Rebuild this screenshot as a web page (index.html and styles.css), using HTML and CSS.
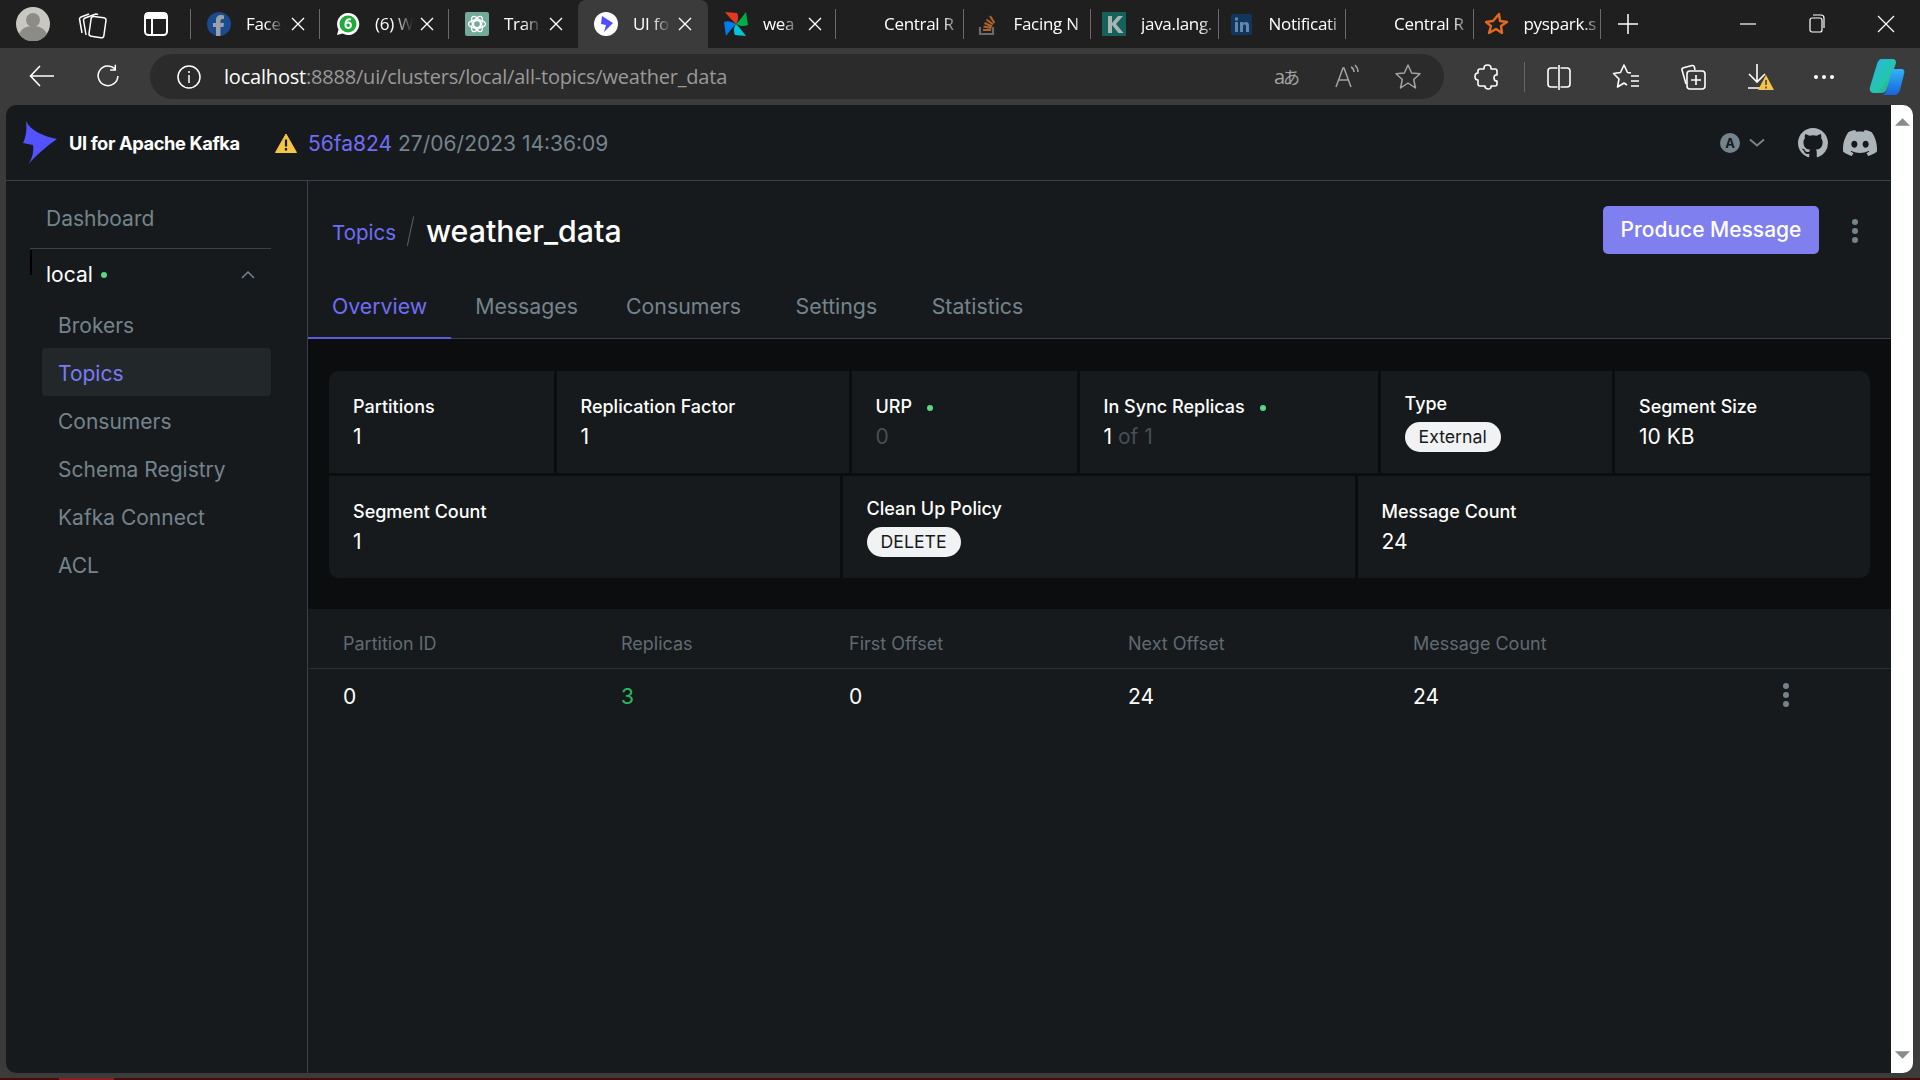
FILE: index.html
```html
<!DOCTYPE html>
<html lang="en">
<head>
<meta charset="utf-8">
<title>UI for Apache Kafka</title>
<link rel="stylesheet" href="styles.css">
</head>
<body>
<svg class="defs" width="0" height="0"><defs><symbol id="x" viewBox="0 0 14 14"><path d="M1 1l12 12M13 1L1 13" stroke="#fff" stroke-width="1.400" fill="none"/></symbol></defs></svg>
<div class="browser">
  <div class="tabbar">
    <svg class="avatar" viewBox="0 0 34 34"><circle cx="17" cy="17" r="17" fill="#c9c7c2"/><circle cx="17" cy="13" r="7" fill="#8d8b87"/><path d="M3 27c3-6 8-8 14-8s11 2 14 8a17 17 0 0 1-28 0z" fill="#8d8b87"/></svg>
    <svg class="tool-ico ws" viewBox="0 0 30 30" fill="none" stroke="#fff" stroke-width="1.500" stroke-linejoin="round"><path d="M4 24L1.500 10c0-1 .5-1.500 1.500-2l8-3"/><path d="M8 26L5.500 11c0-1 .5-1.500 1.500-2l11-4c1 0 1.500.3 1.800 1"/><rect x="12" y="8" width="15" height="20" rx="2.500" transform="rotate(8 19 18)"/></svg>
    <svg class="tool-ico tabsico" viewBox="0 0 30 30" fill="none" stroke="#fff" stroke-width="2"><rect x="4" y="4" width="22" height="22" rx="3.500"/><path d="M4 8.500h22M11 10v16"/><path d="M5 5h20v4H5z" fill="#fff"/></svg>
    <span class="sep"></span>
    <div class="tab"><svg class="fav" viewBox="0 0 24 24"><circle cx="12" cy="12" r="12" fill="#1b4a8f"/><path d="M13.500 24v-9h3l.5-4h-3.500V9c0-1 .5-2 2-2H17V3.500S15.500 3 14 3c-3 0-5 2-5 5v3H6v4h3v9z" fill="#9aa0a8"/></svg><span class="tab-text">Face</span><svg class="tab-x"><use href="#x"/></svg></div>
    <div class="tab"><svg class="fav" viewBox="0 0 24 24"><path d="M12 1a11 11 0 0 0-9.500 16.500L1 23l5.700-1.500A11 11 0 1 0 12 1z" fill="#fff"/><circle cx="12" cy="12" r="8.500" fill="#1faa3c"/><path d="M15 7.500c-3-1-5.500 1-5.500 4.500v1.500a2.700 2.700 0 1 0 2.700-3c-1 0-1.800.4-2.400 1" fill="none" stroke="#fff" stroke-width="2"/></svg><span class="tab-text">(6) W</span><svg class="tab-x"><use href="#x"/></svg></div>
    <div class="tab"><svg class="fav" viewBox="0 0 24 24"><rect width="24" height="24" rx="2" fill="#74aa9c"/><g fill="none" stroke="#fff" stroke-width="1.300"><circle cx="12" cy="12" r="3.500"/><ellipse cx="12" cy="12" rx="8.500" ry="4"/><ellipse cx="12" cy="12" rx="8.500" ry="4" transform="rotate(60 12 12)"/><ellipse cx="12" cy="12" rx="8.500" ry="4" transform="rotate(120 12 12)"/></g></svg><span class="tab-text">Tran</span><svg class="tab-x"><use href="#x"/></svg></div>
    <div class="tab tab-active"><svg class="fav" viewBox="0 0 24 24"><circle cx="12" cy="12" r="12" fill="#fff"/><path d="M8 4l11 7-9 9 2-7-5-1z" fill="#4f4fff"/></svg><span class="tab-text">UI fo</span><svg class="tab-x"><use href="#x"/></svg></div>
    <div class="tab tab-air"><svg class="fav" viewBox="0 0 24 24"><path d="M12 12C8 16 5 20 2 24L0 10c4-2 8 0 12 2z" fill="#017cee"/><path d="M12 12C8 8 4 4 1 0l12 1c2 4 1 8-1 11z" fill="#e43921"/><path d="M12 12c4-4 7-8 10-12l2 13c-4 2-8 1-12-1z" fill="#00ad46"/><path d="M12 12c4 4 7 8 10 12l-11-1c-2-4-1-8 1-11z" fill="#00c7d4"/></svg><span class="tab-text">wea</span><svg class="tab-x"><use href="#x"/></svg></div>
    <div class="tab tab-n tab-blank"><span class="fav"></span><span class="tab-text">Central R</span></div>
    <div class="tab tab-n"><svg class="fav" viewBox="0 0 24 24" fill="none" stroke="#a8642c" stroke-width="2.200"><path d="M5 15v7h13v-7" stroke="#6a6a6a"/><path d="M8 18h8M8.500 14.500l8 1.500M9.500 11l7.500 3.500M11.500 7.500l6.500 5M15 4l4.500 7"/></svg><span class="tab-text">Facing N</span></div>
    <div class="tab tab-n"><svg class="fav" viewBox="0 0 24 24"><rect width="24" height="24" fill="#17615c"/><path d="M6 4h4v7l6-7h5l-7 8 7.500 9H16.500L10 13v8H6z" fill="#a9b5b3"/></svg><span class="tab-text">java.lang.</span></div>
    <div class="tab tab-n"><svg class="fav" viewBox="0 0 24 24"><rect x="1" y="2" width="21" height="21" rx="2" fill="#12355c"/><path d="M5 10h3v10H5zM5 5.500h3v3H5zM10 10h3v1.500c1-2 6-2.500 6 2V20h-3v-6c0-2-3-2-3 0v6h-3z" fill="#5f87ad"/></svg><span class="tab-text">Notificati</span></div>
    <div class="tab tab-n tab-blank"><span class="fav"></span><span class="tab-text">Central R</span></div>
    <div class="tab tab-n"><svg class="fav" viewBox="0 0 24 24" fill="none" stroke="#e2691f" stroke-width="2.400" stroke-linejoin="round"><path d="M14 2l1 7 7 1-6 4 1 7-6-4-7 4 2-7-5-4 7-1z"/></svg><span class="tab-text">pyspark.s</span></div>
    <svg class="win plus" viewBox="0 0 24 24" stroke="#fff" stroke-width="1.500"><path d="M12 2v20M2 12h20"/></svg>
    <svg class="win wmin" viewBox="0 0 24 24" stroke="#fff" stroke-width="1.200"><path d="M4 12h16"/></svg>
    <svg class="win wbox" viewBox="0 0 24 24" stroke="#fff" stroke-width="1.200" fill="none"><rect x="5" y="6" width="12" height="14" rx="2"/><path d="M8 3h8a3 3 0 0 1 3 3v10"/></svg>
    <svg class="win wbox" viewBox="0 0 24 24" stroke="#fff" stroke-width="1.200"><path d="M4 4l16 16M20 4L4 20"/></svg>
  </div>

  <div class="toolbar">
    <svg class="nav-ico" viewBox="-3 -3 36 36" fill="none" stroke="#fff" stroke-width="1.600"><path d="M27 15H4M13 5L3.500 15 13 25"/></svg>
    <svg class="nav-ico reload" viewBox="-6 -6 42 42" fill="none" stroke="#fff" stroke-width="1.800"><path d="M23 6.500A11.500 11.500 0 1 0 26.500 15M23.500 2v6h-6"/></svg>
    <div class="omnibox">
      <svg class="slot" viewBox="0 0 30 30" fill="none" stroke="#fff" stroke-width="1.500"><circle cx="15" cy="15" r="11"/><path d="M15 13v8M15 9v2"/></svg>
      <div class="url"><span class="url-host">localhost</span>:8888/ui/clusters/local/all-topics/weather_data</div>
      <div class="omni-actions">
        <span class="slot translate">a<span class="translate-jp">あ</span></span>
        <svg class="slot" viewBox="0 0 30 30" fill="none" stroke="#a3a3a3" stroke-width="1.500"><path d="M4 25L11 6h1l7 19M7 18h10M19 5c2 1 3 3 3 5M23 3c2 2 3 4 3 7"/></svg>
        <svg class="slot" viewBox="0 0 30 30" fill="none" stroke="#a3a3a3" stroke-width="1.500" stroke-linejoin="round"><path d="M15 3l3.600 8 8.400.800-6.300 5.700 1.800 8.500L15 21l-7.500 5 1.800-8.500L3 11.800l8.400-.800z"/></svg>
      </div>
    </div>
    <div class="tool-actions">
      <svg class="slot" viewBox="0 0 30 30" fill="none" stroke="#fff" stroke-width="1.600" stroke-linejoin="round"><path d="M12 6c0-4 7-4 7 0v1h4c1 0 2 1 2 2v4c-4-1-4 6 0 6v3c0 1-1 2-2 2h-4c1 4-6 4-6 0H8c-1 0-2-1-2-2v-4c-4 0-4-7 0-7V9c0-1 1-2 2-2h4z"/></svg>
      <span class="tool-sep"></span>
      <svg class="slot" viewBox="0 0 30 30" fill="none" stroke="#fff" stroke-width="1.600"><rect x="4" y="6" width="22" height="19" rx="3"/><path d="M15 3v25" stroke-width="3" stroke="#3b3b3b"/><path d="M15 3v25"/></svg>
      <svg class="slot" viewBox="0 0 30 30" fill="none" stroke="#fff" stroke-width="1.600" stroke-linejoin="round"><path d="M20 11l-3.500-.5L13 3l-3.500 7.500-7 1L8 17l-1.500 8 6.500-4 3 2M20 14h8M20 19h8M20 24h8"/></svg>
      <svg class="slot" viewBox="0 0 30 30" fill="none" stroke="#fff" stroke-width="1.600"><path d="M8 22L4 8c-.3-1 .5-2 1.500-2.300L14 3.500c1-.2 2 .3 2.300 1.300L17 8"/><rect x="9" y="9" width="18" height="18" rx="3"/><path d="M18 13v10M13 18h10"/></svg>
      <svg class="slot" viewBox="0 0 30 30"><g fill="none" stroke="#fff" stroke-width="1.600"><path d="M12 2v18M4 12l8 8 8-8M3 26h13"/></g><path d="M21 13l8 15H13z" fill="#f4c44e"/><path d="M21 18v5M21 24.500v2" stroke="#3b3b3b" stroke-width="1.500"/></svg>
      <span class="slot slot-tight dots"><i></i><i></i><i></i></span>
      <svg class="slot slot-tight copilot" viewBox="0 0 36 38"><defs><linearGradient id="cpa" x1="0" y1="0" x2="1" y2="1"><stop offset="0" stop-color="#25b6ee"/><stop offset=".6" stop-color="#25c6a8"/><stop offset="1" stop-color="#2e8f8b"/></linearGradient><linearGradient id="cpb" x1="0" y1="0" x2="0" y2="1"><stop offset="0" stop-color="#2fb4f2"/><stop offset="1" stop-color="#1b63e0"/></linearGradient></defs><path d="M13 1h10c3 0 4 1 4 4l-9 26c-1 3-3 4-6 4H6c-4 0-6-2-5-6L8 6c1-3 2-5 5-5z" fill="url(#cpa)"/><path d="M23 11h9c3 0 4 2 3 5l-4 16c-1 3-3 5-6 5H12c3 0 5-2 6-5z" fill="url(#cpb)"/></svg>
    </div>
  </div>

  <div class="viewport">
    <div class="page">
      <header class="app-header">
        <svg class="logo" viewBox="0 0 36 46"><path d="M4 1c4 9 16 15 31 18C25 26 14 35 6 45c4-6 6-13 5-20L1 23c3-6 4-14 3-22z" fill="#5252ff"/></svg>
        <span class="brand">UI for Apache Kafka</span>
        <svg class="warn" viewBox="0 0 22 20"><path d="M11 1l10.500 18.500H.500z" fill="#f5c547" stroke="#f5c547" stroke-linejoin="round"/><path d="M11 6.500v7M11 15v2.500" stroke="#171a1c" stroke-width="2.200"/></svg>
        <span class="commit">56fa824</span>
        <span class="build-date">27/06/2023 14:36:09</span>
        <div class="header-right">
          <span class="user-a">A</span>
          <svg class="chev" viewBox="0 0 16 10" fill="none" stroke="#73848c" stroke-width="2"><path d="M1 1.500l7 6 7-6"/></svg>
          <svg class="gh" viewBox="0 0 16 16"><path fill="#abb5ba" d="M8 0C3.580 0 0 3.580 0 8c0 3.540 2.290 6.530 5.470 7.590.4.070.55-.17.55-.38 0-.19-.01-.82-.01-1.490-2.010.37-2.530-.49-2.690-.94-.09-.23-.48-.94-.82-1.130-.28-.15-.68-.52-.01-.53.63-.01 1.080.58 1.230.82.720 1.210 1.870.87 2.330.66.070-.52.280-.87.510-1.070-1.780-.2-3.640-.89-3.640-3.950 0-.87.310-1.590.820-2.150-.08-.2-.36-1.020.08-2.120 0 0 .67-.21 2.200.82.640-.18 1.320-.27 2-.27.680 0 1.360.09 2 .27 1.530-1.040 2.200-.82 2.200-.82.440 1.100.160 1.920.080 2.120.510.560.820 1.270.820 2.150 0 3.070-1.870 3.750-3.650 3.950.290.250.540.730.540 1.480 0 1.070-.01 1.930-.01 2.200 0 .21.150.46.550.38A8.013 8.013 0 0016 8c0-4.420-3.580-8-8-8z"/></svg>
          <svg class="dc" viewBox="0 0 24 24"><path fill="#abb5ba" d="M20.317 4.3698a19.7913 19.7913 0 00-4.8851-1.5152.0741.0741 0 00-.0785.0371c-.211.3753-.4447.8648-.6083 1.2495-1.8447-.2762-3.68-.2762-5.4868 0-.1636-.3933-.4058-.8742-.6177-1.2495a.077.077 0 00-.0785-.037 19.7363 19.7363 0 00-4.8852 1.515.0699.0699 0 00-.0321.0277C.5334 9.0458-.319 13.5799.0992 18.0578a.0824.0824 0 00.0312.0561c2.0528 1.5076 4.0413 2.4228 5.9929 3.0294a.0777.0777 0 00.0842-.0276c.4616-.6304.8731-1.2952 1.226-1.9942a.076.076 0 00-.0416-.1057c-.6528-.2476-1.2743-.5495-1.8722-.8923a.077.077 0 01-.0076-.1277c.1258-.0943.2517-.1923.3718-.2914a.0743.0743 0 01.0776-.0105c3.9278 1.7933 8.18 1.7933 12.0614 0a.0739.0739 0 01.0785.0095c.1202.099.246.1981.3728.2924a.077.077 0 01-.0066.1276 12.2986 12.2986 0 01-1.873.8914.0766.0766 0 00-.0407.1067c.3604.698.7719 1.3628 1.225 1.9932a.076.076 0 00.0842.0286c1.961-.6067 3.9495-1.5219 6.0023-3.0294a.077.077 0 00.0313-.0552c.5004-5.177-.8382-9.6739-3.5485-13.6604a.061.061 0 00-.0312-.0286zM8.02 15.3312c-1.1825 0-2.1569-1.0857-2.1569-2.419 0-1.3332.9555-2.4189 2.157-2.4189 1.2108 0 2.1757 1.0952 2.1568 2.419 0 1.3332-.9555 2.4189-2.1569 2.4189zm7.9748 0c-1.1825 0-2.1569-1.0857-2.1569-2.419 0-1.3332.9554-2.4189 2.1569-2.4189 1.2108 0 2.1757 1.0952 2.1568 2.419 0 1.3332-.946 2.4189-2.1568 2.4189Z"/></svg>
        </div>
      </header>
      <div class="app-body">
        <nav class="sidebar">
          <div class="nav-top">Dashboard</div>
          <div class="cluster"><span class="cluster-name">local</span><span class="dot"></span><svg class="cluster-chev" viewBox="0 0 14 8" fill="none" stroke="#73848c" stroke-width="1.500"><path d="M1 7l6-6 6 6"/></svg></div>
          <div class="nav-item">Brokers</div>
          <div class="nav-item nav-selected">Topics</div>
          <div class="nav-item">Consumers</div>
          <div class="nav-item">Schema Registry</div>
          <div class="nav-item">Kafka Connect</div>
          <div class="nav-item">ACL</div>
        </nav>
        <main class="main">
          <div class="title-row">
            <span class="crumb">Topics</span>
            <span class="crumb-sep"></span>
            <h1 class="title">weather_data</h1>
            <button class="produce">Produce Message</button>
            <span class="kebab kebab-page"><i></i><i></i><i></i></span>
          </div>
          <div class="tabs">
            <span class="tab-link tab-link-on">Overview</span>
            <span class="tab-link">Messages</span>
            <span class="tab-link">Consumers</span>
            <span class="tab-link tab-link-wide">Settings</span>
            <span class="tab-link tab-link-wide">Statistics</span>
          </div>
          <section class="metrics">
            <div class="metric-row metric-row-a">
              <div class="metric metric-first"><div class="m-label">Partitions</div><div class="m-value">1</div></div>
              <div class="metric"><div class="m-label">Replication Factor</div><div class="m-value">1</div></div>
              <div class="metric"><div class="m-label">URP<span class="dot dot-m"></span></div><div class="m-value m-dim">0</div></div>
              <div class="metric"><div class="m-label">In Sync Replicas<span class="dot dot-m"></span></div><div class="m-value">1 <span class="m-dim">of 1</span></div></div>
              <div class="metric metric-pill"><div class="m-label">Type</div><span class="pill">External</span></div>
              <div class="metric metric-last"><div class="m-label">Segment Size</div><div class="m-value">10 KB</div></div>
            </div>
            <div class="metric-row metric-row-b">
              <div class="metric metric-first-b"><div class="m-label">Segment Count</div><div class="m-value">1</div></div>
              <div class="metric metric-pill"><div class="m-label">Clean Up Policy</div><span class="pill">DELETE</span></div>
              <div class="metric metric-last-b"><div class="m-label">Message Count</div><div class="m-value">24</div></div>
            </div>
          </section>
          <section class="table">
            <div class="t-row t-head"><span>Partition ID</span><span>Replicas</span><span>First Offset</span><span>Next Offset</span><span>Message Count</span><span></span></div>
            <div class="t-row t-data"><span>0</span><span class="t-green">3</span><span>0</span><span>24</span><span>24</span><span class="kebab"><i></i><i></i><i></i></span></div>
          </section>
        </main>
      </div>
    </div>
    <div class="scrollbar">
      <svg class="arrow" viewBox="0 0 16 8"><path d="M8 0l8 8H0z" fill="#8a8a8a"/></svg>
      <svg class="arrow" viewBox="0 0 16 8"><path d="M8 8L0 0h16z" fill="#8a8a8a"/></svg>
    </div>
  </div>
  <div class="bottom-gap"></div>
  <div class="taskstrip"><span class="task-hi"></span></div>
</div>
</body>
</html>
```

FILE: styles.css
```css
* { box-sizing: border-box; }
html, body { margin: 0; padding: 0; height: 100%; overflow: hidden; background: #3b3b3b; }
body { font-family: "Inter", "Liberation Sans", sans-serif; }
.defs { display: block; height: 0; }
.browser { width: 1920px; height: 1080px; display: flex; flex-direction: column; }

/* browser chrome */
.tabbar { height: 48px; background: #1f1f1f; display: flex; align-items: center; padding-left: 16px; font-family: "Open Sans", "Liberation Sans", sans-serif; color: #fff; flex: none; }
.avatar { width: 34px; height: 34px; flex: none; }
.tool-ico { width: 30px; height: 30px; flex: none; }
.ws { margin-left: 28px; }
.tabsico { margin-left: 33px; }
.sep { width: 1px; height: 30px; background: #6a6a6a; margin-left: 19px; flex: none; }
.tab { width: 129px; height: 48px; display: flex; align-items: center; padding-left: 16px; flex: none; position: relative; }
.tab::after { content: ""; position: absolute; right: 0; top: 9px; width: 1px; height: 30px; background: #6a6a6a; }
.tab-active { width: 130px; background: #3b3b3b; border-radius: 8px 8px 0 0; }
.tab-active::after, .tab:nth-of-type(3)::after { display: none; }
.tab-air { width: 128px; }
.tab-n { width: 127.5px; padding-left: 11px; }
.tab-blank { padding-left: 16px; }
.fav { width: 24px; height: 24px; flex: none; display: block; }
.tab-text { margin: 0 0 2px 15px; width: 38px; font-size: 17px; white-space: nowrap; overflow: hidden; -webkit-mask-image: linear-gradient(90deg, #000 50%, transparent); mask-image: linear-gradient(90deg, #000 50%, transparent); flex: none; letter-spacing: -0.3px; }
.tab-n .tab-text { width: 78px; -webkit-mask-image: linear-gradient(90deg, #000 75%, transparent); mask-image: linear-gradient(90deg, #000 75%, transparent); }
.tab-blank .tab-text { margin-left: 8px; }
.tab-x { width: 14px; height: 14px; margin-left: 7px; flex: none; }
.win { width: 24px; height: 24px; flex: none; }
.plus { margin-left: 15px; }
.wmin { margin-left: 96px; }
.wbox { margin-left: 45px; }

.toolbar { height: 57px; background: #3b3b3b; display: flex; align-items: flex-start; padding: 6px 0 0 24px; flex: none; }
.nav-ico { width: 36px; height: 36px; margin-top: 4px; flex: none; }
.reload { margin-left: 30px; }
.omnibox { width: 1294px; height: 45px; margin-left: 24px; background: #2b2b2b; border-radius: 23px; display: flex; align-items: center; padding: 0 21px 0 24px; flex: none; font-family: "Open Sans", "Liberation Sans", sans-serif; }
.slot { width: 30px; height: 30px; flex: none; display: block; }
.url { margin-left: 20px; font-size: 20px; color: #9a9a9a; white-space: nowrap; letter-spacing: -0.2px; }
.url-host { color: #fff; }
.omni-actions { margin-left: auto; display: flex; gap: 31px; align-items: center; }
.translate { font-size: 20px; color: #a3a3a3; line-height: 30px; text-align: center; white-space: nowrap; letter-spacing: -2px; }
.translate-jp { font-family: "Noto Sans CJK JP", sans-serif; font-size: 17px; }
.tool-actions { margin-left: 28px; display: flex; align-items: center; height: 45px; }
.tool-sep { width: 1px; height: 30px; background: #666; margin: 0 19px 0 22px; flex: none; }
.tool-actions .slot + .slot { margin-left: 37px; }
.tool-actions .slot-tight.slot-tight { margin-left: 34px; }
.tool-actions .copilot { width: 36px; height: 38px; margin-left: 30px !important; }
.dots { display: flex; gap: 4px; align-items: center; justify-content: center; }
.dots i { width: 4px; height: 4px; border-radius: 50%; background: #fff; }

/* app viewport */
.viewport { height: 968px; display: flex; margin: 0 7px 0 6px; flex: none; }
.page { flex: 1; background: #171a1c; border-radius: 10px 0 0 10px; display: flex; flex-direction: column; color: #fff; min-width: 0; }
.scrollbar { width: 22px; background: #fff; border-radius: 0 10px 10px 0; display: flex; flex-direction: column; justify-content: space-between; align-items: center; padding: 13px 0 14px; flex: none; }
.arrow { width: 15px; height: 8px; }
.bottom-gap { height: 5px; background: #3b3b3b; flex: none; }
.taskstrip { height: 2px; background: #4a0a0a; flex: none; }
.task-hi { display: block; width: 55px; height: 2px; margin-left: 59px; background: #8c1f1f; }

.app-header { height: 76px; border-bottom: 1px solid #3a4148; display: flex; align-items: center; padding-left: 16px; flex: none; }
.logo { width: 36px; height: 46px; flex: none; }
.brand { margin-left: 11px; font-size: 18.300px; font-weight: 700; letter-spacing: -0.4px; white-space: nowrap; width: 176px; }
.warn { width: 22px; height: 20px; margin-left: 30px; flex: none; }
.commit { margin: 2px 0 0 11px; font-size: 21px; color: #6e6ef5; }
.build-date { margin: 2px 0 0 6px; font-size: 21px; color: #73848c; }
.header-right { margin-left: auto; display: flex; align-items: center; padding-right: 14px; }
.user-a { width: 20px; height: 20px; border-radius: 50%; background: #73848c; color: #171a1c; font-size: 13px; font-weight: 700; text-align: center; line-height: 20px; }
.chev { width: 16px; height: 10px; margin-left: 9px; }
.gh { width: 30px; height: 30px; margin-left: 33px; }
.dc { width: 34px; height: 34px; margin-left: 15px; }

.app-body { flex: 1; display: flex; min-height: 0; }
.sidebar { width: 302px; border-right: 1px solid #3a4148; padding: 14px 36px 0 24px; flex: none; font-size: 21px; color: #73848c; }
.nav-top { height: 48px; line-height: 48px; padding-left: 16px; margin-bottom: 5px; }
.cluster { height: 52px; border-top: 1px solid #3a4148; display: flex; align-items: center; padding-left: 16px; color: #fff; position: relative; }
.cluster::before { content: ""; position: absolute; left: 0; top: 1px; width: 2px; height: 25px; background: #000; }
.dot { width: 6px; height: 6px; border-radius: 50%; background: #5cd685; margin-left: 8px; flex: none; display: inline-block; }
.cluster-chev { width: 14px; height: 8px; margin-left: auto; margin-right: 16px; }
.nav-item { height: 48px; line-height: 51px; margin-left: 12px; padding-left: 16px; border-radius: 4px; }
.nav-selected { background: #22282a; color: #7b7bf5; }

.main { flex: 1; display: flex; flex-direction: column; min-width: 0; }
.title-row { height: 99px; display: flex; align-items: center; padding-left: 24px; flex: none; }
.crumb { font-size: 20.500px; color: #6e6ef5; margin-top: 4px; }
.crumb-sep { width: 1px; height: 30px; margin: 0 15px 0 14px; background: #56646b; transform: rotate(12deg); }
.title { margin: 0; font-size: 30.300px; font-weight: 500; white-space: nowrap; }
.produce { margin-left: auto; margin-bottom: 2px; width: 216px; height: 48px; border: 0; border-radius: 5px; background: #7f7ff0; color: #fff; font: 500 21px "Inter", sans-serif; }
.kebab { display: flex; flex-direction: column; gap: 3px; align-items: center; }
.kebab i { width: 6px; height: 6px; border-radius: 50%; background: #73848c; }
.kebab-page { margin-left: 33px; margin-right: 33px; }
.tabs { height: 59px; border-bottom: 1px solid #3a4148; display: flex; flex: none; font-size: 21.300px; color: #73848c; }
.tab-link { height: 58px; padding: 0 24px 6px; display: flex; align-items: center; }
.tab-link-wide { margin-left: 6.500px; }
.tab-link-on { color: #6e6ef5; border-bottom: 2px solid #5b5be0; height: 59px; padding-bottom: 5px; }

.metrics { background: #0c0d0f; padding: 32px 21px 31px; display: flex; flex-direction: column; gap: 3px; flex: none; }
.metric-row { display: grid; column-gap: 3px; }
.metric-row-a { grid-template-columns: 224.500px 292px 225px 298px 231.500px 1fr; height: 102px; }
.metric-row-b { grid-template-columns: 510.500px 512px 1fr; height: 102px; }
.metric { background: #171a1c; padding: 0 0 2px 24px; display: flex; flex-direction: column; justify-content: center; align-items: flex-start; gap: 5px; }
.metric-pill { padding-bottom: 1px; gap: 6px; }
.metric-first { border-top-left-radius: 10px; }
.metric-last { border-top-right-radius: 10px; }
.metric-first-b { border-bottom-left-radius: 10px; }
.metric-last-b { border-bottom-right-radius: 10px; }
.m-label { font-size: 18px; font-weight: 500; line-height: 25px; white-space: nowrap; }
.m-value { font-size: 21px; line-height: 25px; white-space: nowrap; }
.m-dim { color: #454f54; }
.dot-m { margin-left: 15px; vertical-align: 2px; }
.pill { height: 30px; line-height: 30px; padding: 0 14px; border-radius: 15px; background: #f1f2f3; color: #171a1c; font-size: 17.700px; }

.table { flex: 1; min-height: 0; }
.t-row { display: grid; grid-template-columns: 278px 228px 279px 285px 363px 20px; padding-left: 35px; }
.t-head { height: 60px; padding-top: 23px; border-bottom: 1px solid #2a3136; color: #5f6b72; font-size: 18px; line-height: 24px; }
.t-data { padding-top: 14px; font-size: 21px; line-height: 28px; }
.t-green { color: #2eb860; }
```
